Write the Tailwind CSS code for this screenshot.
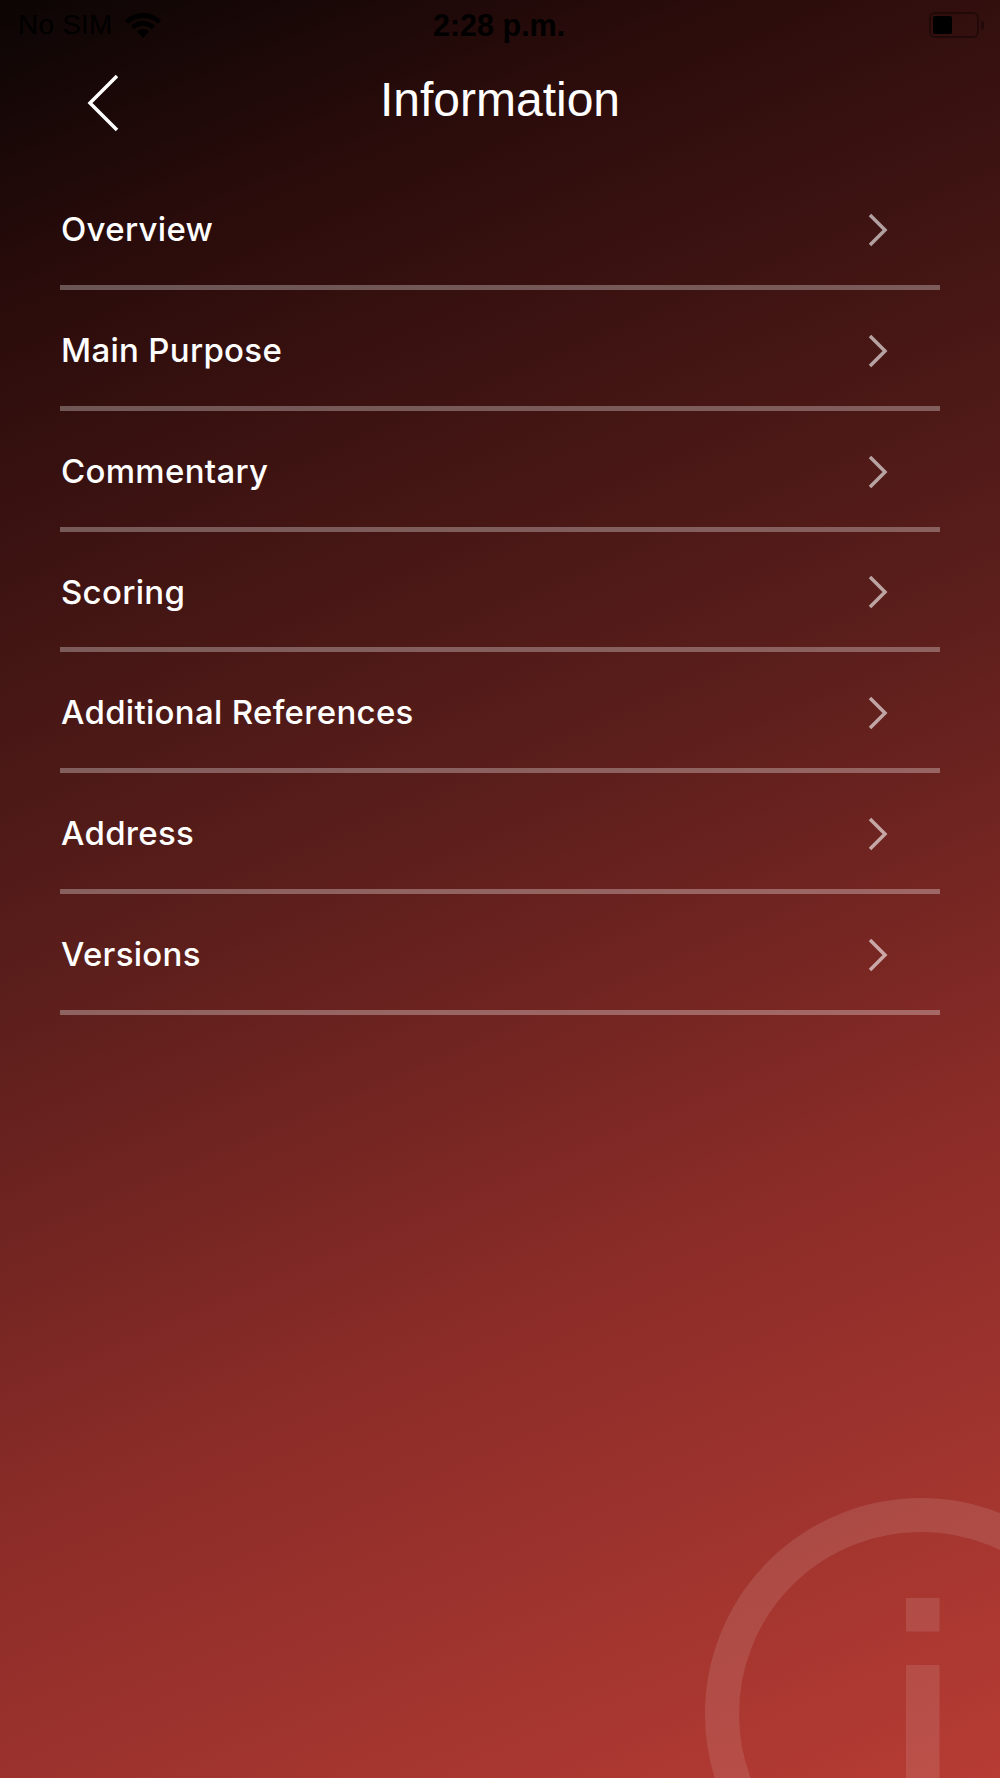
<!DOCTYPE html>
<html>
<head>
<meta charset="utf-8">
<script src="https://cdn.jsdelivr.net/npm/@tailwindcss/browser@4"></script>
</head>
<body class="m-0">
<div class="relative w-[1000px] h-[1778px] overflow-hidden bg-[linear-gradient(157deg,#0b0504_0%,#2a0c0b_14%,#5a1e1b_45%,#8c2c28_70%,#b63c34_100%)] font-['Inter',sans-serif]">
  <svg class="absolute left-0 top-0 pointer-events-none" width="1000" height="1778" viewBox="0 0 1000 1778" fill="none">
    <circle cx="921" cy="1714" r="199" stroke="#ffffff" stroke-opacity="0.11" stroke-width="34"/>
    <rect x="906" y="1598" width="33.5" height="33.5" fill="#ffffff" fill-opacity="0.11"/>
    <rect x="906" y="1665" width="33.5" height="113" fill="#ffffff" fill-opacity="0.11"/>
  </svg>

  <div class="relative flex items-center justify-between h-[50px] pl-[18px] pr-[15px] text-black font-['Liberation_Sans',sans-serif] text-[28px]">
    <div class="flex items-center gap-[12px]">
      <span class="tracking-[0.2px]">No SIM</span>
      <svg width="36" height="25" viewBox="0 0 36 25" fill="#000000"><path d="M18 0C11 0 5 2.600 0 7.500L3 10.800C7 7 12 5 18 5S29 7 33 10.800L36 7.500C31 2.600 25 0 18 0Z"/><path d="M18 8C13.500 8 9.500 9.700 6 13L9.200 16.300C11.500 14 14.600 12.800 18 12.800S24.500 14 26.800 16.300L30 13C26.500 9.700 22.500 8 18 8Z"/><path d="M18 16C15.800 16 13.800 16.800 12 18.400L18 25L24 18.400C22.200 16.800 20.200 16 18 16Z"/></svg>
    </div>
    <span class="absolute left-[433px] top-[8px] font-bold text-[30.500px] leading-[35px]">2:28 p.m.</span>
    <div class="flex items-center gap-[2px] mr-[1px]">
      <div class="w-[50px] h-[26px] rounded-[6px] border-2 border-black/35 p-[2px]"><div class="w-[19px] h-full rounded-[2px] bg-black"></div></div>
      <div class="w-[3px] h-[9px] rounded-r-[2px] bg-black/35"></div>
    </div>
  </div>

  <div class="relative flex items-center justify-center h-[106px] pb-[6px]">
    <svg class="absolute left-[86px] top-[24px]" width="34" height="58" viewBox="0 0 34 58" fill="none"><path d="M31 2L4 29L31 56" stroke="#ffffff" stroke-width="3.500"/></svg>
    <span class="text-white text-[48px] font-['Liberation_Sans',sans-serif] leading-none">Information</span>
  </div>

  <div class="relative px-[60px]">
    <div class="flex items-center justify-between h-[134px] border-b-[5px] border-white/30 pl-[1px] pr-[53px] pt-[18px] text-white text-[33px] font-medium tracking-[0.3px]"><span>Overview</span><svg class="-mr-[1px]" width="20" height="34" viewBox="0 0 20 34" fill="none"><path d="M2 2L17 17L2 32" stroke="#ffffff" stroke-opacity="0.6" stroke-width="3.500"/></svg></div>
    <div class="flex items-center justify-between h-[120.75px] border-b-[5px] border-white/30 pl-[1px] pr-[53px] pt-[6px] text-white text-[33px] font-medium tracking-[0.3px]"><span>Main Purpose</span><svg class="-mr-[1px]" width="20" height="34" viewBox="0 0 20 34" fill="none"><path d="M2 2L17 17L2 32" stroke="#ffffff" stroke-opacity="0.6" stroke-width="3.500"/></svg></div>
    <div class="flex items-center justify-between h-[120.75px] border-b-[5px] border-white/30 pl-[1px] pr-[53px] pt-[6px] text-white text-[33px] font-medium tracking-[0.3px]"><span>Commentary</span><svg class="-mr-[1px]" width="20" height="34" viewBox="0 0 20 34" fill="none"><path d="M2 2L17 17L2 32" stroke="#ffffff" stroke-opacity="0.6" stroke-width="3.500"/></svg></div>
    <div class="flex items-center justify-between h-[120.75px] border-b-[5px] border-white/30 pl-[1px] pr-[53px] pt-[6px] text-white text-[33px] font-medium tracking-[0.3px]"><span>Scoring</span><svg class="-mr-[1px]" width="20" height="34" viewBox="0 0 20 34" fill="none"><path d="M2 2L17 17L2 32" stroke="#ffffff" stroke-opacity="0.6" stroke-width="3.500"/></svg></div>
    <div class="flex items-center justify-between h-[120.75px] border-b-[5px] border-white/30 pl-[1px] pr-[53px] pt-[6px] text-white text-[33px] font-medium tracking-[0.3px]"><span>Additional References</span><svg class="-mr-[1px]" width="20" height="34" viewBox="0 0 20 34" fill="none"><path d="M2 2L17 17L2 32" stroke="#ffffff" stroke-opacity="0.6" stroke-width="3.500"/></svg></div>
    <div class="flex items-center justify-between h-[120.75px] border-b-[5px] border-white/30 pl-[1px] pr-[53px] pt-[6px] text-white text-[33px] font-medium tracking-[0.3px]"><span>Address</span><svg class="-mr-[1px]" width="20" height="34" viewBox="0 0 20 34" fill="none"><path d="M2 2L17 17L2 32" stroke="#ffffff" stroke-opacity="0.6" stroke-width="3.500"/></svg></div>
    <div class="flex items-center justify-between h-[120.75px] border-b-[5px] border-white/30 pl-[1px] pr-[53px] pt-[6px] text-white text-[33px] font-medium tracking-[0.3px]"><span>Versions</span><svg class="-mr-[1px]" width="20" height="34" viewBox="0 0 20 34" fill="none"><path d="M2 2L17 17L2 32" stroke="#ffffff" stroke-opacity="0.6" stroke-width="3.500"/></svg></div>
  </div>
</div>
</body>
</html>
